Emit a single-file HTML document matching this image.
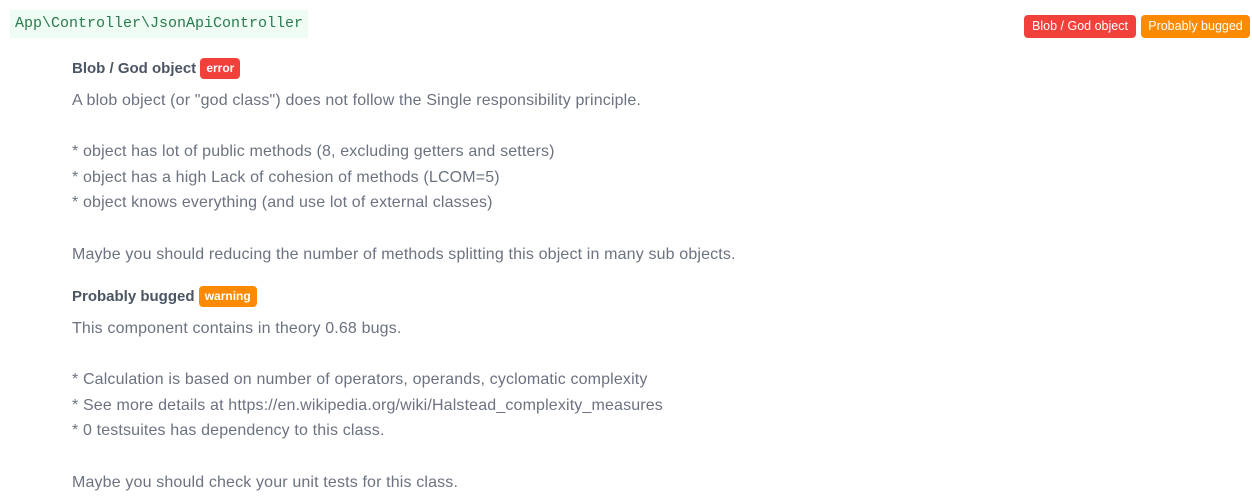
<!DOCTYPE html>
<html><head><style>
body{margin:0;background:#fff;font-family:"Liberation Sans",sans-serif;color:#6b7280;}
.code{position:absolute;left:10px;top:10px;width:298px;height:28px;background:#effcf3;font-family:"Liberation Mono",monospace;font-size:15px;color:#2a7a4f;line-height:28px;padding-left:5px;box-sizing:border-box;}
.tag{position:absolute;top:15px;height:23px;line-height:23px;border-radius:4px;color:#fff;font-size:12.5px;text-align:center;}
.sec{position:absolute;left:72px;width:1100px;font-size:16px;letter-spacing:0.15px;}
h4{margin:0 0 7px;font-size:15px;letter-spacing:0;font-weight:bold;color:#4b5563;height:25px;line-height:25px;}
.b{display:inline-block;color:#fff;font-size:12px;font-weight:bold;padding:0 6px;border-radius:4px;height:21px;line-height:21px;vertical-align:1px;}
p{margin:0;line-height:25.6px;}
</style></head><body>
<div class="code">App\Controller\JsonApiController</div>
<div class="tag" style="left:1024px;width:112px;background:#f2413a">Blob / God object</div>
<div class="tag" style="left:1141px;width:109px;background:#fd8a00">Probably bugged</div>
<div class="sec" style="top:56px">
<h4>Blob / God object <span class="b" style="background:#f2413a">error</span></h4>
<p>A blob object (or "god class") does not follow the Single responsibility principle.</p>
<p>&nbsp;</p>
<p>* object has lot of public methods (8, excluding getters and setters)</p>
<p>* object has a high Lack of cohesion of methods (LCOM=5)</p>
<p>* object knows everything (and use lot of external classes)</p>
<p>&nbsp;</p>
<p>Maybe you should reducing the number of methods splitting this object in many sub objects.</p>
</div>
<div class="sec" style="top:284px">
<h4>Probably bugged <span class="b" style="background:#fd8a00">warning</span></h4>
<p>This component contains in theory 0.68 bugs.</p>
<p>&nbsp;</p>
<p>* Calculation is based on number of operators, operands, cyclomatic complexity</p>
<p>* See more details at https://en.wikipedia.org/wiki/Halstead_complexity_measures</p>
<p>* 0 testsuites has dependency to this class.</p>
<p>&nbsp;</p>
<p>Maybe you should check your unit tests for this class.</p>
</div>
</body></html>
